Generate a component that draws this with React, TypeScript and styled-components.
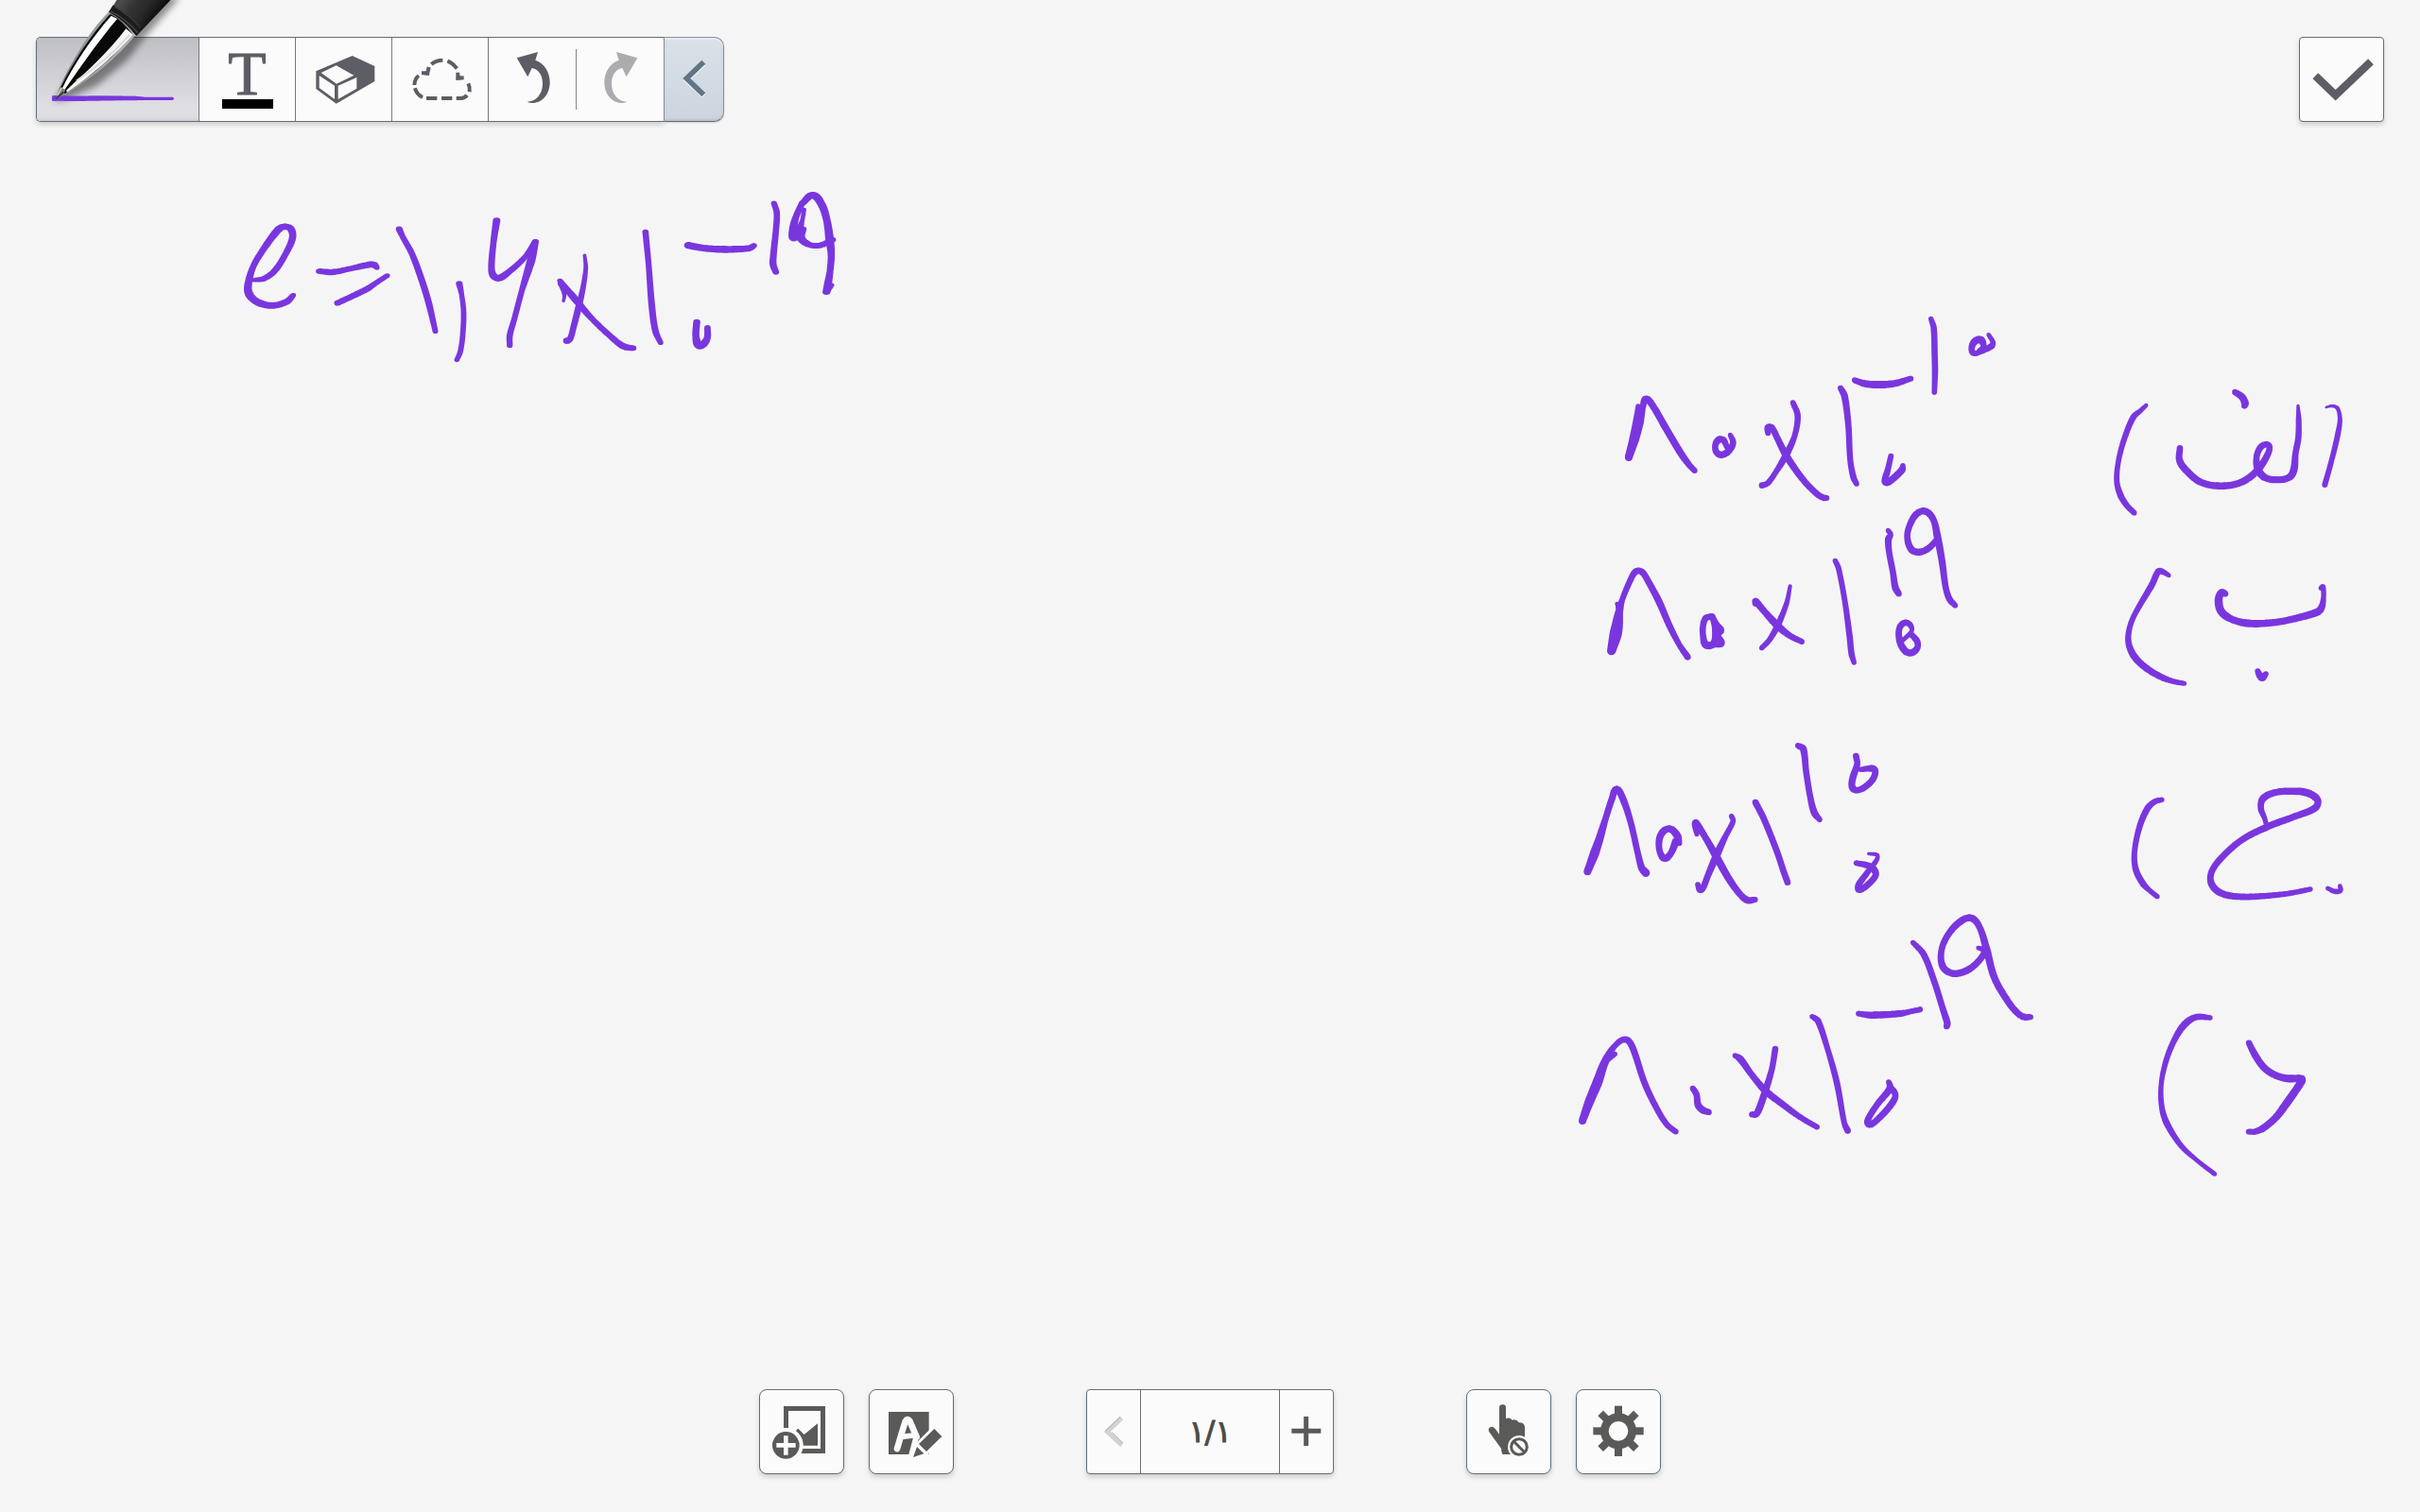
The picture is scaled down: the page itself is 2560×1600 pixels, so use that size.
import React from "react";
import styled, { createGlobalStyle, css } from "styled-components";

const INK = "#7a36de";
const ICON = "#5d5d66";
const TOOL = "#5a5a58";
const EDGE = "#5f6e7a";
const FACE = "#fbfbfb";

const GlobalStyle = createGlobalStyle`
  *, *::before, *::after { box-sizing: border-box; }
  html, body { margin: 0; background: #f5f5f5; }
  body { font-family: "DejaVu Sans", "Noto Sans", sans-serif; overflow: hidden; }
`;

const Page = styled.div`
  position: relative;
  display: flex;
  flex-direction: column;
  justify-content: space-between;
  min-height: 100vh;
  background: #f5f5f5;
`;

const Header = styled.header`
  position: relative;
  display: flex;
  justify-content: space-between;
  padding: 39px 38px 0;
`;

const Footer = styled.footer`
  position: relative;
  display: flex;
  justify-content: center;
  gap: 140px;
  padding-bottom: 40px;
`;

const Group = styled.div`
  display: flex;
  gap: 26px;
`;

const panel = css`
  border: 1px solid ${EDGE};
  background: ${FACE};
  box-shadow: 0 3px 5px rgba(0, 0, 0, 0.16);
`;

const bare = css`
  display: flex;
  align-items: center;
  justify-content: center;
  padding: 0;
  margin: 0;
  border: 0;
  background: none;
  font: inherit;
  cursor: pointer;
`;

const SquareButton = styled.button<{ $radius: number }>`
  ${bare}
  ${panel}
  width: 90px;
  height: 90px;
  border-radius: ${(p) => p.$radius}px;
`;

const Toolbar = styled.div`
  display: flex;
  height: 90px;
`;

const Tools = styled.div`
  ${panel}
  display: flex;
  border-right: 0;
  border-radius: 5px 0 0 5px;
`;

const ToolButton = styled.button<{ $width: number; $divided?: boolean }>`
  ${bare}
  width: ${(p) => p.$width}px;
  border-right: ${(p) => (p.$divided ? "1px solid #777a7d" : "0")};
`;

const PenButton = styled(ToolButton)`
  position: relative;
  border-radius: 4px 0 0 4px;
  background: linear-gradient(#bfbec4 0%, #c4c3c8 12%, #e0dfe4 85%, #dddce1 96%, #cfced3 100%);
`;

const PenArt = styled.svg`
  position: absolute;
  left: -1px;
  bottom: -1px;
  width: 173px;
  height: 129px;
  overflow: visible;
  pointer-events: none;
`;

const TextTool = styled.span`
  display: flex;
  flex-direction: column;
  align-items: center;
  gap: 4px;
  padding-top: 2px;
  font-family: "Liberation Serif", serif;
  font-size: 66px;
  line-height: 46px;
  color: ${ICON};
  -webkit-text-stroke: 1px ${ICON};
  &::after {
    content: "";
    width: 54px;
    height: 10px;
    background: #000;
  }
`;

const HistoryDivider = styled.span`
  align-self: center;
  width: 1px;
  height: 64px;
  background: #85868a;
`;

const CollapseButton = styled.button`
  ${bare}
  width: 64px;
  border: 1px solid #8b9097;
  border-bottom-color: #686c71;
  border-radius: 0 10px 10px 0;
  background: linear-gradient(#dae1e8, #ccd4df);
  box-shadow: inset 0 2px 1px #e6ecf2, inset 0 -2px 2px #bcc3cd, 0 1px 2px rgba(0, 0, 0, 0.15);
`;

const Pager = styled.nav`
  ${panel}
  display: flex;
  height: 90px;
  border-radius: 4px;
`;

const PagerButton = styled.button`
  ${bare}
  width: 56px;
`;

const PageCount = styled.span`
  display: flex;
  align-items: center;
  justify-content: center;
  width: 148px;
  border: solid #6b6f73;
  border-width: 0 1px;
  font-family: "DejaVu Sans", sans-serif;
  font-size: 32px;
  line-height: 36px;
  color: #4b4b47;
  -webkit-text-stroke: 1px #4b4b47;
`;

const IconSvg = styled.svg`
  display: block;
  flex: none;
  width: 64px;
  height: 64px;
  overflow: visible;
`;

const Canvas = styled.svg`
  position: absolute;
  inset: 0;
  width: 100%;
  height: 100%;
`;

/* Icons are drawn on a 192-unit grid centred on (cx, cy). */
function Icon({ cx, cy, children }: { cx: number; cy: number; children: React.ReactNode }) {
  return (
    <IconSvg viewBox={`${cx - 96} ${cy - 96} 192 192`} aria-hidden="true">
      {children}
    </IconSvg>
  );
}

type Point = [number, number, number];

/* Each stroke is a list of "x,y,width" pen samples; they are smoothed
   with a Catmull-Rom spline and stamped with a round nib. */
function strokePath(source: string, bleed = 0): string {
  const pts = source
    .trim()
    .split(/\s+/)
    .map((s) => s.split(",").map(Number) as Point);
  const stamps: string[] = [];
  const stamp = (x: number, y: number, width: number) => {
    const w = width + bleed;
    const r = w / 2;
    stamps.push(
      `M${(x - r).toFixed(2)} ${y.toFixed(2)}a${r.toFixed(2)} ${r.toFixed(2)} 0 1 0 ${w.toFixed(2)} 0a${r.toFixed(2)} ${r.toFixed(2)} 0 1 0 ${(-w).toFixed(2)} 0z`
    );
  };
  for (let i = 0; i < pts.length - 1; i++) {
    const a = pts[Math.max(0, i - 1)];
    const b = pts[i];
    const c = pts[i + 1];
    const d = pts[Math.min(pts.length - 1, i + 2)];
    const chord = Math.hypot(c[0] - b[0], c[1] - b[1]);
    const n = Math.max(2, Math.ceil(chord / 2));
    // Tangents are limited by the chord so that short hooks do not overshoot.
    const tangent = (p: Point, q: Point, k: 0 | 1) => {
      const span = Math.hypot(q[0] - p[0], q[1] - p[1]) || 1;
      return ((q[k] - p[k]) / span) * Math.min(chord, span / 2 + chord / 4);
    };
    for (let j = 0; j <= n; j++) {
      const t = j / n;
      const t2 = t * t;
      const t3 = t2 * t;
      const at = (k: 0 | 1) =>
        (2 * t3 - 3 * t2 + 1) * b[k] +
        (t3 - 2 * t2 + t) * tangent(a, c, k) +
        (3 * t2 - 2 * t3) * c[k] +
        (t3 - t2) * tangent(b, d, k);
      stamp(at(0), at(1), b[2] + (c[2] - b[2]) * t);
    }
  }
  return stamps.join("");
}

interface Sheet {
  x: number;
  y: number;
  scale: string;
  strokes: string[];
}

const THIRD = "0.3333";

const sheets: Sheet[] = [
  {
    x: 240,
    y: 190,
    scale: "0.4209 0.3333",
    strokes: [
      "68,319,11 92,315,15 120,290,15 148,235,14 165,185,16 160,156,17 143,150,18 127,162,18 90,225,15 65,280,14 53,340,18 58,368,20 80,391,20 115,400,18 150,388,17 167,367,12",
      "232,291,15 265,294,17 310,283,15 355,271,18 370,271,18 377,280,12",
      "278,392,15 350,349,16 375,328,13 403,305,12",
      "433,157,15 442,182,13 465,235,14 490,320,15 508,395,15 524,482,12",
      "584,330,15 590,365,11 595,420,12 593,490,12 587,545,12 578,573,11",
      "678,130,17 670,200,14 665,280,15 670,305,17 684,313,19 710,292,15 750,245,13 775,197,14",
      "776,197,14 765,255,20 742,350,13 722,445,13 711,495,14 711,527,13",
      "899,240,7 902,280,10 895,345,12 884,405,15 872,465,14 863,505,14 855,512,18",
      "846,386,6 848,365,9 837,330,10",
      "837,321,12 870,372,17 920,445,14 980,515,15 1000,531,18 1021,535,15",
      "1052,166,14 1060,270,13 1068,400,15 1077,480,15 1090,518,12",
      "1181,452,16 1179,500,16 1188,527,22 1206,508,16 1208,470,14",
      "1160,209,20 1200,218,19 1250,222,20 1300,220,18 1315,217,17 1325,209,13",
      "1375,75,13 1382,105,14 1380,160,14 1374,235,15 1373,270,16 1380,294,14",
      "1446,74,14 1430,120,15 1424,155,20 1424,185,20 1436,170,18 1446,130,10 1451,95,9",
      "1449,157,14 1443,185,20 1462,206,16 1490,209,16 1523,191,14",
      "1447,75,14 1473,50,20 1495,80,18 1508,130,17 1515,190,20 1519,240,16 1516,290,15 1511,330,18 1507,356,18",
      "1520,335,11 1509,352,15",
    ],
  },
  {
    x: 1660,
    y: 320,
    scale: THIRD,
    strokes: [
      "189,492,22 208,432,28 222,380,28 234,330,18 243,307,20 262,323,19 310,405,20 355,480,20 380,515,17 398,534,16",
      "219,330,14 213,372,18 200,440,20 188,490,20",
      "500,458,15 490,438,18 475,436,20 464,452,18 467,475,18 484,484,20 508,470,18 520,445,18 511,421,13",
      "710,318,15 725,360,18 715,425,16 688,485,20 655,540,15 630,574,16 612,581,18",
      "631,415,16 631,398,20 643,398,18 660,430,18 688,485,20 740,560,18 785,607,17 806,620,18 817,621,16",
      "861,272,16 874,298,20 886,390,18 892,500,17 902,555,18 912,576,15",
      "906,247,16 938,258,20 980,261,22 1030,258,20 1084,242,16",
      "1148,52,14 1157,82,18 1160,170,18 1161,220,18 1159,285,15",
      "1302,155,16 1315,140,16 1306,119,22 1286,125,20 1277,148,18 1285,162,16 1308,155,16 1340,139,18 1345,127,14 1331,103,12",
      "1021,488,16 1012,528,17 1002,567,20 1010,573,18 1035,553,20 1057,530,20 1059,518,14",
      "134,1106,26 145,1050,32 157,990,25 168,945,16 195,880,17 212,854,18 231,856,18 252,888,18 285,950,20 320,1030,18 350,1088,16 376,1126,18",
      "152,957,12 161,990,16 155,1050,24 137,1102,24",
      "450,998,18 434,1002,18 425,1025,18 425,1060,18 434,1087,22 458,1084,20 464,1040,20 455,998,16",
      "453,996,16 468,1025,20 485,1041,12 470,1055,20 485,1084,14 450,1085,16",
      "701,901,11 690,955,14 662,1025,18 635,1072,15 611,1097,14",
      "592,955,20 592,949,20 620,982,18 662,1027,22 700,1058,17 738,1077,16",
      "844,820,14 855,845,16 875,950,16 890,1060,18 896,1115,18 904,1143,14",
      "1012,724,13 1020,737,15 1013,752,20 1015,790,18 1028,860,18 1035,905,20 1046,925,17",
      "1168,752,16 1140,781,18 1110,793,20 1085,783,20 1073,742,18 1084,700,18 1105,670,19 1130,663,20 1155,688,18 1168,740,22 1183,820,20 1195,905,18 1207,942,18 1225,962,15",
      "1060,1072,12 1087,1043,12 1082,1024,16 1065,1017,18 1048,1035,18 1049,1075,20 1065,1105,20 1083,1113,20 1103,1100,18 1105,1078,18 1085,1053,16",
    ],
  },
  {
    x: 1660,
    y: 760,
    scale: THIRD,
    strokes: [
      "58,487,22 80,430,28 97,380,24 115,320,18 135,258,19 150,226,20 170,255,20 195,330,18 218,430,18 230,475,20 243,491,24",
      "350,397,15 344,375,22 322,352,20 300,358,20 286,385,20 288,425,18 303,445,20 322,430,18 338,392,22",
      "515,311,14 520,327,15 496,375,16 470,430,22 440,500,18 425,538,18 415,545,18 408,528,15",
      "405,368,13 398,338,16 402,332,20 430,375,18 470,445,22 510,515,20 545,562,18 567,578,20 590,576,16",
      "591,267,18 618,320,18 660,425,18 680,485,18 693,521,18",
      "726,87,16 743,98,20 752,170,18 765,250,18 778,300,20 795,322,15",
      "910,120,18 914,145,18 900,190,20 898,218,20 912,229,18 942,216,18 967,188,18 967,162,20 925,163,14",
      "950,430,8 979,439,12 950,485,16 918,530,18 920,545,18 945,531,18 973,498,18 965,478,20 945,467,18 911,460,15",
      "42,1278,22 65,1215,28 90,1155,30 113,1092,24 145,1040,15 178,1020,18 200,1043,19 240,1160,18 280,1243,17 310,1290,16 338,1313,16",
      "145,1066,14 120,1085,16",
      "392,1175,16 404,1195,18 409,1228,20 424,1244,20 443,1251,17",
      "654,1050,18 643,1115,17 622,1185,20 603,1240,20 592,1258,18 580,1258,17",
      "526,1071,14 543,1082,20 580,1133,17 622,1182,20 680,1228,18 735,1268,16 786,1298,16",
      "771,947,14 790,962,18 820,1050,16 850,1160,18 873,1285,16 884,1310,18",
      "1014,1155,15 1018,1175,20 975,1230,17 946,1280,18 955,1291,18 985,1268,18 1025,1222,19 1035,1195,18 1016,1168,16",
      "918,938,15 960,943,20 1050,938,19 1085,931,15 1114,925,16",
      "1091,712,14 1125,750,18 1160,840,18 1185,920,18 1200,968,20 1198,978,18",
      "1298,729,12 1318,740,18 1292,779,18 1255,804,20 1215,810,20 1185,787,20 1182,735,18 1205,684,18 1245,643,20 1278,635,20 1303,665,18 1325,735,22 1350,825,20 1395,903,19 1425,938,18 1445,949,19 1464,949,16",
    ],
  },
  {
    x: 2220,
    y: 390,
    scale: THIRD,
    strokes: [
      "151,117,11 135,132,13 110,155,17 80,228,16 62,300,15 58,360,16 70,403,18 90,435,16 113,458,15",
      "433,75,17 455,90,20 465,110,22 463,118,18",
      "258,253,18 257,292,20 280,325,20 325,361,20 390,373,20 455,360,20 505,322,20 537,272,18 542,248,18 530,241,18 512,253,18 501,285,18 507,322,22 530,347,20 575,353,19 607,344,20 620,320,22 625,270,18 634,220,18 635,160,16 633,118,8",
      "722,123,5 742,119,8 758,126,11 766,160,13 760,205,16 740,290,15 718,369,16",
      "223,657,12 205,646,16 190,644,18 170,685,18 115,780,15 98,825,16 95,870,18 112,912,20 150,950,19 200,980,18 240,994,15 272,1000,13",
      "402,715,18 390,711,20 381,735,24 390,772,24 425,797,20 475,809,22 540,808,20 600,799,20 690,775,22 707,760,20 714,725,14 712,693,15 706,697,14",
      "505,961,16 512,975,20 520,982,20 531,969,15",
    ],
  },
  {
    x: 2220,
    y: 820,
    scale: THIRD,
    strokes: [
      "201,79,14 178,85,16 155,107,18 130,165,17 114,245,16 118,300,18 140,344,18 160,365,14 186,386,14",
      "533,161,13 527,138,14 515,105,18 522,75,20 560,56,19 620,52,20 665,58,22 695,80,20 687,105,20 620,133,19 540,163,20 460,203,18 400,253,18 360,305,18 358,345,20 390,376,20 450,387,18 520,385,17 600,377,15 672,363,14",
      "727,360,12 750,370,14 767,367,15 766,353,12",
      "354,771,14 310,769,18 275,790,20 243,837,17 215,905,16 199,980,14 200,1050,16 215,1103,18 260,1175,15 310,1222,12 368,1267,13",
      "477,851,17 497,890,20 525,929,20 560,953,20 600,964,22 644,964,20 645,972,22 600,1038,24 562,1088,20 520,1123,20 495,1133,17 476,1133,15",
    ],
  },
];

const ERASER_FACES = [
  "958,231 1006,208 1062,239 1007,266",
  "952,240 1001,272 1001,315 952,279",
  "1012,272 1071,246 1071,281 1012,315",
];

const UNDO_ARROW =
  "M440 124L507 105L499 131C528 140 545 171 545 201C545 240 520 267 490 267Q480 267 473 263C501 262 522 238 522 206C522 180 511 161 488 156L475 184Z";

function PenDrawing() {
  return (
    <PenArt viewBox="54 0 519 387" aria-hidden="true">
      <defs>
        <linearGradient id="barrel" gradientUnits="userSpaceOnUse" x1="330" y1="0" x2="430" y2="70">
          <stop offset="0" stopColor="#4a4a4a" />
          <stop offset="0.3" stopColor="#333333" />
          <stop offset="0.6" stopColor="#2a2a2a" />
          <stop offset="1" stopColor="#0c0c0c" />
        </linearGradient>
        <linearGradient id="chrome" gradientUnits="userSpaceOnUse" x1="190" y1="120" x2="290" y2="210">
          <stop offset="0" stopColor="#a9b2b6" />
          <stop offset="0.4" stopColor="#6d7679" />
          <stop offset="1" stopColor="#b5b7ba" />
        </linearGradient>
        <filter id="soft" x="-20%" y="-20%" width="150%" height="150%">
          <feGaussianBlur stdDeviation="11" />
        </filter>
      </defs>
      <path
        d="M112 325L160 312L250 270L345 190L400 118L512 -10L440 -10L300 90L170 230Z"
        fill="#000"
        opacity="0.42"
        filter="url(#soft)"
      />
      <path d={strokePath("113,312,16 180,313,16 280,312,15 370,312,13 400,313,10 487,313,10")} fill={INK} />
      <path d="M105 304H120V320H105Z" fill={INK} />
      <path d="M300 17L314 -6H487L374 113L285 38Z" fill="url(#barrel)" />
      <path d="M285 38L299 16Q350 48 388 92L373 113Q338 68 285 38Z" fill="#1c1c1c" />
      <path d="M291 36Q340 60 377 104" fill="none" stroke="#4d4d4d" strokeWidth="4" />
      <path d="M304 21Q350 48 386 87" fill="none" stroke="#454545" strokeWidth="3" />
      <path
        d="M117 312L133 270C160 210 220 100 285 38Q338 66 370 112C310 185 230 250 148 299Z"
        fill="url(#chrome)"
      />
      <path
        d="M131 281C168 204 222 117 290 44Q330 66 360 109C305 178 232 240 146 297Z"
        fill="#090909"
      />
      <path d="M137 281C173 207 232 118 293 50L312 60C262 118 204 200 145 285Z" fill="#fff" />
      <path d="M150 287C215 227 285 165 340 91L362 110C308 172 232 238 153 293Z" fill="#f4f4f6" />
      <path d="M182 256C245 215 300 170 352 110" fill="none" stroke="#d9d9dd" strokeWidth="5" />
      <path d="M116 313L131 274L147 287L142 298Z" fill="#857d75" />
      <path d="M122 303L135 280" fill="none" stroke="#e4ddd6" strokeWidth="4" />
      <path d="M117 313L142 292" fill="none" stroke="#3e3832" strokeWidth="5" />
    </PenArt>
  );
}

export default function App() {
  return (
    <Page>
      <GlobalStyle />
      <Canvas viewBox="0 0 2560 1600" preserveAspectRatio="xMidYMin meet" aria-hidden="true">
        {sheets.map((sheet) => (
          <g
            key={`${sheet.x}-${sheet.y}`}
            transform={`translate(${sheet.x} ${sheet.y}) scale(${sheet.scale})`}
            fill={INK}
          >
            {sheet.strokes.map((s) => (
              <path key={s} d={strokePath(s, 2)} />
            ))}
          </g>
        ))}
      </Canvas>

      <Header>
        <Toolbar role="toolbar">
          <Tools>
            <PenButton $width={172} $divided aria-label="Pen" aria-pressed="true">
              <PenDrawing />
            </PenButton>
            <ToolButton $width={102} $divided>
              <TextTool>T</TextTool>
            </ToolButton>
            <ToolButton $width={102} $divided aria-label="Eraser">
              <Icon cx={1031} cy={252}>
                <path d="M942 226L1057 177L1128 210V258L1006 329L942 282Z" fill={ICON} />
                {ERASER_FACES.map((f) => (
                  <polygon key={f} points={f} fill={FACE} />
                ))}
              </Icon>
            </ToolButton>
            <ToolButton $width={102} $divided aria-label="Select">
              <Icon cx={197} cy={192}>
                <g fill="none" stroke={ICON} strokeWidth="12">
                  <path d="M152 252H186M200 252H234M247 252H262Q274 251 281 242" />
                  <path d="M289 232Q291 217 285 205M219 134Q236 140 249 158M168 144Q182 131 204 131" />
                  <path d="M160 153L156 172L137 172M252 170L252 188L271 187" />
                  <path d="M128 180Q115 190 114 210M116 220Q121 240 140 249" />
                </g>
                <path d="M152 165L161 168L161 180L145 178ZM248 180L260 180L266 193L247 194Z" fill={ICON} />
              </Icon>
            </ToolButton>
            <ToolButton $width={92} aria-label="Undo">
              <Icon cx={489} cy={192}>
                <path d={UNDO_ARROW} fill={ICON} />
              </Icon>
            </ToolButton>
            <HistoryDivider />
            <ToolButton $width={92} aria-label="Redo">
              <Icon cx={767} cy={192}>
                <path d={UNDO_ARROW} fill="#acacb0" transform="translate(1262 0) scale(-1 1)" />
              </Icon>
            </ToolButton>
          </Tools>
          <CollapseButton aria-label="Collapse toolbar">
            <Icon cx={1001} cy={192}>
              <path d="M1032 142L978 194L1032 244" fill="none" stroke="#fff" strokeWidth="15" />
              <path d="M1032 137L978 189L1032 241" fill="none" stroke="#617587" strokeWidth="17" />
            </Icon>
          </CollapseButton>
        </Toolbar>
        <SquareButton $radius={4} aria-label="Done">
          <Icon cx={231} cy={191}>
            <path d="M148 180L212 241L324 135" fill="none" stroke={ICON} strokeWidth="25" />
          </Icon>
        </SquareButton>
      </Header>

      <Footer>
        <Group>
          <SquareButton $radius={8} aria-label="Insert image">
            <Icon cx={204} cy={195}>
              <path d="M147 114H279V264H147ZM162 129V249H264V129Z" fill={TOOL} fillRule="evenodd" />
              <path d="M187 190L193 185L212 204L255 169V239H187Z" fill={TOOL} />
              <circle cx="154" cy="238" r="55" fill={FACE} />
              <circle cx="154" cy="238" r="43" fill={TOOL} />
              <path d="M124 238H185M154 208V269" stroke={FACE} strokeWidth="14" />
            </Icon>
          </SquareButton>
          <SquareButton $radius={8} aria-label="Handwriting">
            <Icon cx={552} cy={195}>
              <path d="M480 132H608V267H480Z" fill={TOOL} />
              <g fill="none" stroke={FACE} strokeLinecap="round" strokeLinejoin="round">
                <path d="M507 249Q523 195 533 163Q540 150 548 163L569 212" strokeWidth="20" />
                <path d="M520 211L560 207M566 217L552 270" strokeWidth="17" />
              </g>
              <path
                d="M625 186L649 210L600 258L558 276L571 242L576 234Z"
                fill={FACE}
                stroke={FACE}
                strokeWidth="17"
              />
              <path d="M608 267H556L600 250Z" fill={FACE} />
              <path d="M625 186L649 210L600 258L576 234ZM570 243L592 265L558 276Z" fill={TOOL} />
            </Icon>
          </SquareButton>
        </Group>

        <Pager aria-label="Pages">
          <PagerButton aria-label="Previous page">
            <Icon cx={143} cy={195}>
              <path d="M169 152L123 195L169 238" fill="none" stroke="#d2d2d2" strokeWidth="14" />
              <path d="M164 148L116 193M138 197L173 232" fill="none" stroke="#a6a8a8" strokeWidth="3" />
            </Icon>
          </PagerButton>
          <PageCount>۱/۱</PageCount>
          <PagerButton aria-label="Add page">
            <Icon cx={755} cy={195}>
              <path d="M708 193H801M754 147V240" stroke={TOOL} strokeWidth="15" />
            </Icon>
          </PagerButton>
        </Pager>

        <Group>
          <SquareButton $radius={8} aria-label="Palm rejection">
            <Icon cx={198} cy={195}>
              <path
                d="M168 119Q168 109 179 109Q189 109 189 119V154Q201 147 209 158Q223 154 230 166Q249 166 249 182V267H180Q176 267 174 248L136 196Q131 186 139 181Q148 176 156 187L168 203Z"
                fill={TOOL}
              />
              <circle cx="231" cy="243" r="36" fill={FACE} />
              <circle cx="231" cy="243" r="25" fill="none" stroke={TOOL} strokeWidth="9" />
              <path d="M213 225L249 261" stroke={TOOL} strokeWidth="9" />
            </Icon>
          </SquareButton>
          <SquareButton $radius={8} aria-label="Settings">
            <Icon cx={546} cy={195}>
              <g transform="translate(546 193)">
                <circle r="44" fill="none" stroke={TOOL} strokeWidth="26" />
                {[0, 45, 90, 135, 180, 225, 270, 315].map((angle) => (
                  <rect
                    key={angle}
                    x="-12"
                    y="-80"
                    width="24"
                    height="32"
                    fill={TOOL}
                    transform={`rotate(${angle})`}
                  />
                ))}
              </g>
            </Icon>
          </SquareButton>
        </Group>
      </Footer>
    </Page>
  );
}
